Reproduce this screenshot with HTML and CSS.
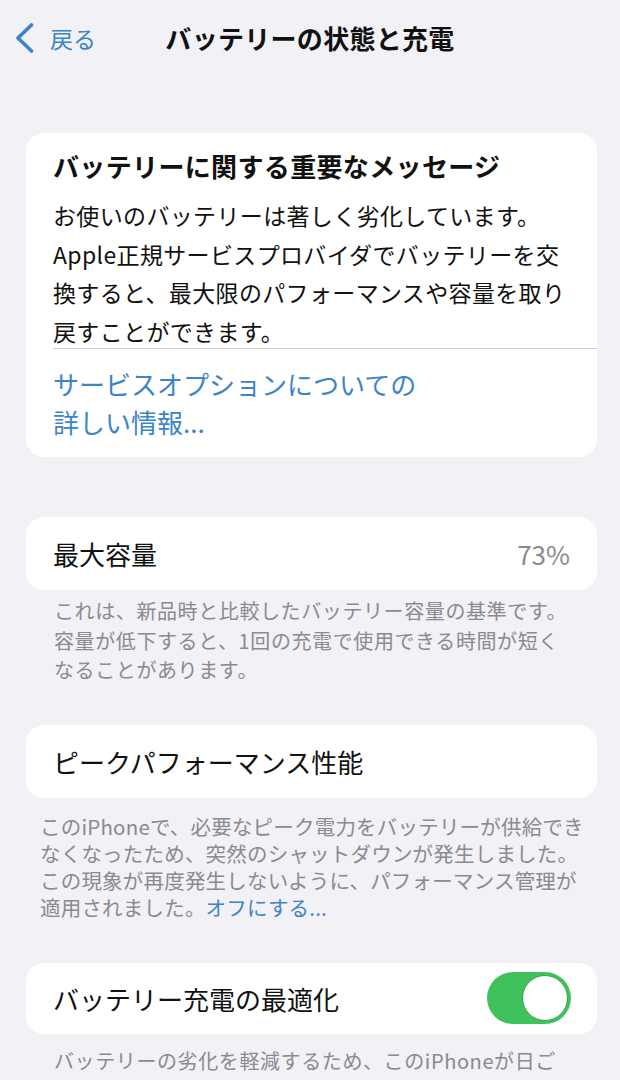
FILE: index.html
```html
<!DOCTYPE html>
<html lang="ja">
<head>
    <meta charset="utf-8">
    <title>バッテリーの状態と充電</title>
    <link rel="stylesheet" href="styles.css">
</head>
<body>
    <div class="nav">
        <a class="back">
            <svg class="chevron" width="19" height="30" viewBox="0 0 19 30">
                <path d="M16.5 2 L3 15 L16.5 28" fill="none" stroke="currentColor" stroke-width="3.6" stroke-linecap="round" stroke-linejoin="round"/>
            </svg>
            <span>戻る</span>
        </a>
        <h1 class="title">バッテリーの状態と充電</h1>
    </div>

    <div class="content">
        <!-- 重要なメッセージ -->
        <div class="card message">
            <h2 class="msgTitle">バッテリーに関する重要なメッセージ</h2>
            <p class="msgBody">お使いのバッテリーは著しく劣化しています。<br>Apple正規サービスプロバイダでバッテリーを交<br>換すると、最大限のパフォーマンスや容量を取り<br>戻すことができます。</p>
            <div class="sep"></div>
            <a class="msgLink">サービスオプションについての<br>詳しい情報...</a>
        </div>

        <div class="card row cap">
            <span>最大容量</span>
            <span class="value">73%</span>
        </div>
        <p class="footer">これは、新品時と比較したバッテリー容量の基準です。<br>容量が低下すると、1回の充電で使用できる時間が短く<br>なることがあります。</p>

        <div class="card row peak">
            <span>ピークパフォーマンス性能</span>
        </div>
        <p class="footer wide">このiPhoneで、必要なピーク電力をバッテリーが供給でき<br>なくなったため、突然のシャットダウンが発生しました。<br>この現象が再度発生しないように、パフォーマンス管理が<br>適用されました。<a class="inlineLink">オフにする...</a></p>

        <div class="card row opt">
            <span>バッテリー充電の最適化</span>
            <div class="toggle"><span class="knob"></span></div>
        </div>
        <p class="footer last">バッテリーの劣化を軽減するため、このiPhoneが日ご<br>ろの充電パターンを学習し、お使いになる必要があるまで</p>
    </div>
</body>
</html>
```

FILE: styles.css
```css
html, body {
    margin: 0;
    padding: 0;
}

body {
    width: 620px;
    height: 1080px;
    overflow: hidden;
    background-color: #f1f1f6;
    color: #111;
    font-family: "Noto Sans CJK JP", "Noto Sans", sans-serif;
}

.nav {
    height: 76px;
    display: grid;
    grid-template-columns: 1fr auto 1fr;
    align-items: center;
}

.back {
    display: flex;
    align-items: center;
    gap: 16px;
    padding-left: 15px;
    color: #3c84c8;
    font-size: 23px;
}

.back span {
    line-height: 30px;
}

.title {
    margin: 0;
    font-size: 26px;
    font-weight: 700;
    line-height: 34px;
    color: #111;
    letter-spacing: 0.3px;
}

.content {
    padding: 0 23px 0 26px;
}

.card {
    background-color: #fff;
    border-radius: 18px;
}

.message {
    margin-top: 57px;
    padding: 16px 0 16px 27px;
}

.msgTitle {
    margin: 0 0 13px 0;
    font-size: 26px;
    font-weight: 700;
    line-height: 34px;
    letter-spacing: 0.35px;
}

.msgBody {
    margin: 0;
    font-size: 23px;
    line-height: 38.5px;
    letter-spacing: 0.35px;
    white-space: nowrap;
}

.sep {
    height: 1px;
    margin-top: -2px;
    background-color: #cfcfd3;
}

.msgLink {
    display: block;
    margin-top: 16px;
    font-size: 26px;
    line-height: 38px;
    color: #3c84c8;
}

.row {
    height: 73px;
    padding: 0 27px;
    display: flex;
    align-items: center;
    justify-content: space-between;
    font-size: 26px;
}

.value {
    color: #8a8a8f;
}

.cap {
    margin-top: 60px;
}

.peak {
    margin-top: 40px;
}

.opt {
    height: 71px;
    margin-top: 42px;
    padding-right: 26px;
}

.footer {
    margin: 6px 0 0 0;
    padding-left: 28px;
    font-size: 20px;
    line-height: 29.5px;
    letter-spacing: 0.6px;
    color: #8a8a8f;
    white-space: nowrap;
}

.footer.wide {
    margin-top: 15px;
    padding-left: 14px;
    font-size: 20.5px;
    line-height: 27px;
    letter-spacing: 0.2px;
}

.footer.last {
    margin-top: 12px;
}

.inlineLink {
    color: #3c84c8;
}

.toggle {
    width: 84px;
    height: 52px;
    box-sizing: border-box;
    padding: 3px;
    border-radius: 26px;
    background-color: #3fc25c;
    display: flex;
    justify-content: flex-end;
}

.knob {
    width: 46px;
    height: 46px;
    box-sizing: border-box;
    border-radius: 50%;
    background-color: #fff;
    border: 1.5px solid #35a24f;
}
```
